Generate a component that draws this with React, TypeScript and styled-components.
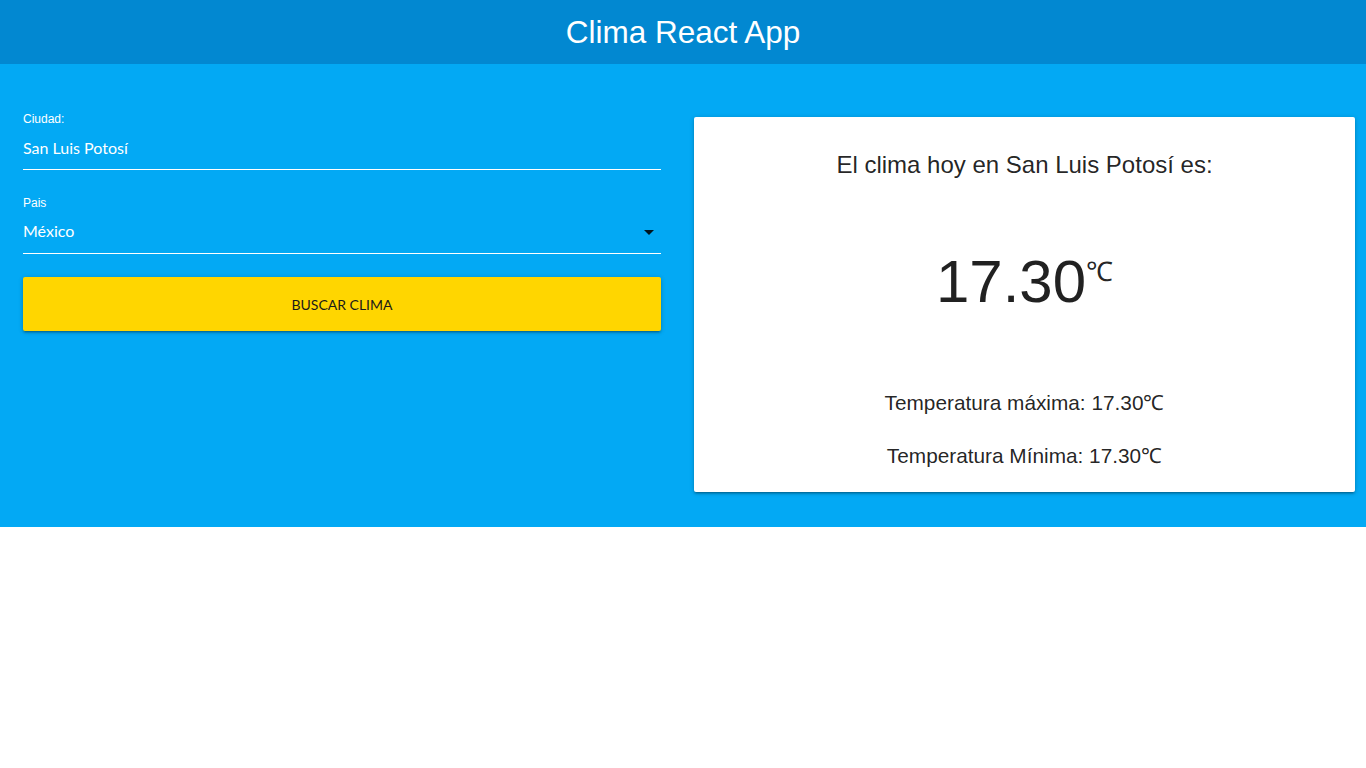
import React from "react";
import styled, { createGlobalStyle } from "styled-components";

const GlobalStyle = createGlobalStyle`
  html, body {
    margin: 0;
    padding: 0;
    background: #ffffff;
    font-family: "Liberation Sans", Arial, sans-serif;
  }
  * { box-sizing: border-box; }
`;

const Header = styled.header`
  height: 64px;
  background: #0288d1;
  display: flex;
  align-items: center;
  justify-content: center;
`;

const Title = styled.h1`
  margin: 0;
  color: #ffffff;
  font-family: "Liberation Sans", Arial, sans-serif;
  font-weight: 400;
  font-size: 31.5px;
  line-height: 40px;
`;

const Main = styled.main`
  background: #03a9f4;
  padding: 45px 0 35px;
  display: grid;
  grid-template-columns: 683px 683px;
  align-items: start;
`;

const FormColumn = styled.form`
  padding: 0 22px 0 23px;
  display: flex;
  flex-direction: column;
  gap: 23px;
`;

const Field = styled.div`
  display: flex;
  flex-direction: column;
`;

const Label = styled.label`
  color: #ffffff;
  font-family: "Liberation Sans", Arial, sans-serif;
  font-size: 12px;
  line-height: 20px;
`;

const Control = styled.div`
  position: relative;
  height: 41px;
  padding-bottom: 4px;
  border-bottom: 1px solid #ffffff;
  display: flex;
  align-items: center;
`;

const TextInput = styled.input`
  width: 100%;
  height: 36px;
  border: none;
  outline: none;
  background: transparent;
  padding: 0;
  color: #ffffff;
  font-family: Lato, "Open Sans", sans-serif;
  font-size: 16px;
`;

const SelectValue = styled.div`
  flex: 1;
  color: #ffffff;
  font-family: Lato, "Open Sans", sans-serif;
  font-size: 16px;
  line-height: 36px;
`;

const Caret = styled.svg`
  width: 24px;
  height: 24px;
  fill: rgba(0, 0, 0, 0.87);
  flex: none;
  margin-top: 2px;
`;

const Button = styled.button`
  height: 54px;
  border: none;
  border-radius: 2px;
  background: #ffd600;
  color: #1a1a1a;
  font-family: Lato, "Open Sans", sans-serif;
  font-size: 14px;
  text-transform: uppercase;
  letter-spacing: 0;
  cursor: pointer;
  box-shadow: 0 2px 2px 0 rgba(0, 0, 0, 0.14), 0 3px 1px -2px rgba(0, 0, 0, 0.12),
    0 1px 5px 0 rgba(0, 0, 0, 0.2);
`;

const ResultColumn = styled.section`
  padding: 0 11px;
  margin-top: 8px;
`;

const Card = styled.div`
  background: #ffffff;
  border-radius: 2px;
  padding: 33px 0 22px;
  text-align: center;
  color: rgba(0, 0, 0, 0.87);
  box-shadow: 0 2px 2px 0 rgba(0, 0, 0, 0.14), 0 3px 1px -2px rgba(0, 0, 0, 0.12),
    0 1px 5px 0 rgba(0, 0, 0, 0.2);
`;

const CardTitle = styled.h2`
  margin: 0;
  font-weight: 400;
  font-size: 24px;
  line-height: 30px;
`;

const Temperature = styled.p`
  margin: 67px 0 0;
  font-size: 60px;
  line-height: 70px;
`;

const Unit = styled.span`
  font-size: 27px;
  line-height: 28px;
  vertical-align: top;
  position: relative;
  top: 11px;
`;

const Detail = styled.p<{ $gap: number }>`
  margin: ${(p) => p.$gap}px 0 0;
  font-size: 20.8px;
  line-height: 28px;
`;

export default function App() {
  return (
    <>
      <GlobalStyle />
      <Header>
        <Title>Clima React App</Title>
      </Header>
      <Main>
        <FormColumn onSubmit={(e) => e.preventDefault()}>
          <Field>
            <Label htmlFor="ciudad">Ciudad:</Label>
            <Control>
              <TextInput id="ciudad" type="text" defaultValue="San Luis Potosí" />
            </Control>
          </Field>
          <Field>
            <Label>Pais</Label>
            <Control>
              <SelectValue>México</SelectValue>
              <Caret viewBox="0 0 24 24">
                <path d="M7 10l5 5 5-5z" />
              </Caret>
            </Control>
          </Field>
          <Button type="submit">Buscar Clima</Button>
        </FormColumn>
        <ResultColumn>
          <Card>
            <CardTitle>El clima hoy en San Luis Potosí es:</CardTitle>
            <Temperature>
              17.30<Unit>℃</Unit>
            </Temperature>
            <Detail $gap={72}>Temperatura máxima: 17.30℃</Detail>
            <Detail $gap={25}>Temperatura Mínima: 17.30℃</Detail>
          </Card>
        </ResultColumn>
      </Main>
    </>
  );
}
